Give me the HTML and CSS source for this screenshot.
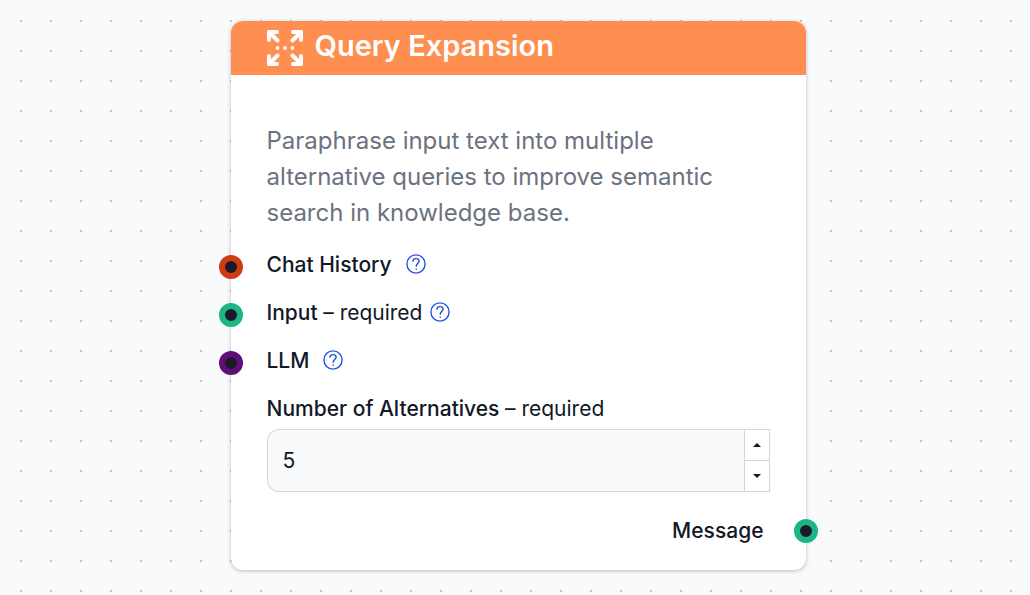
FILE: index.html
```
<!DOCTYPE html>
<html lang="en">
<head>
  <meta charset="UTF-8" />
  <meta name="viewport" content="width=device-width, initial-scale=1.0"/>
  <title>Query Expansion</title>
  <link rel="stylesheet" href="styles.css">
</head>
<body>

<svg class="sprite" aria-hidden="true">
  <symbol id="help" viewBox="0 0 20 20">
    <circle cx="10" cy="10" r="9.1" />
    <path d="M6.9 7.2C7.1 5.5 8.4 4.6 10.1 4.6C11.9 4.6 13.1 5.7 13.1 7.2C13.1 9.3 10.2 9.5 10.2 12.2" />
    <path d="M10.2 15V15.3" />
  </symbol>
</svg>

<main class="canvas">
  <section class="node">
    <header class="node-header">
      <svg class="node-icon" viewBox="0 0 36 36" aria-hidden="true">
        <g class="arrows">
          <path d="M2 10V2H10M2 2L10.5 10.5" />
          <path d="M26 2H34V10M34 2L25.5 10.5" />
          <path d="M2 26V34H10M2 34L10.5 25.5" />
          <path d="M26 34H34V26M34 34L25.5 25.5" />
        </g>
        <circle cx="10.5" cy="18" r="1.9" />
        <circle cx="18" cy="18" r="1.9" />
        <circle cx="25.5" cy="18" r="1.9" />
      </svg>
      <h1>Query Expansion</h1>
    </header>

    <div class="node-body">
      <p class="description">Paraphrase input text into multiple alternative queries to improve semantic search in knowledge base.</p>

      <div class="row">
        <span class="handle handle-in red"></span>
        <span class="label">Chat History</span>
        <button class="help spaced" type="button" aria-label="About Chat History"><svg><use href="#help" /></svg></button>
      </div>
      <div class="row">
        <span class="handle handle-in green"></span>
        <span class="label">Input <span class="required">– required</span></span>
        <button class="help" type="button" aria-label="About Input"><svg><use href="#help" /></svg></button>
      </div>
      <div class="row">
        <span class="handle handle-in purple"></span>
        <span class="label">LLM</span>
        <button class="help spaced" type="button" aria-label="About LLM"><svg><use href="#help" /></svg></button>
      </div>

      <div class="field">
        <label class="label" for="alternatives">Number of Alternatives <span class="required">– required</span></label>
        <div class="number">
          <input id="alternatives" type="text" inputmode="numeric" value="5">
          <div class="steps">
            <button type="button" onclick="step(1)" aria-label="Increase"><svg viewBox="0 0 8 4"><path d="M0 4L4 0L8 4Z" /></svg></button>
            <button type="button" onclick="step(-1)" aria-label="Decrease"><svg viewBox="0 0 8 4"><path d="M0 0L4 4L8 0Z" /></svg></button>
          </div>
        </div>
      </div>

      <div class="row output">
        <span class="label">Message</span>
        <span class="handle handle-out green"></span>
      </div>
    </div>
  </section>
</main>

<script>
  const input = document.getElementById('alternatives');

  function step(amount) {
    input.value = Math.max(1, (parseInt(input.value, 10) || 0) + amount);
  }
</script>

</body>
</html>
```
FILE: styles.css
```
* {
  box-sizing: border-box;
}
body {
  margin: 0;
  font-family: Inter, "Liberation Sans", sans-serif;
  color: #111827;
}
button {
  padding: 0;
  border: none;
  background: none;
  cursor: pointer;
}
.sprite {
  display: none;
}
.canvas {
  min-height: 100vh;
  padding: 21px 24px 24px 30px;
  background-color: #f9fafc;
  background-image: radial-gradient(circle at 1px 1px, #c2c2c4 1px, transparent 1px);
  background-size: 30px 30px;
  background-position: 20px 20px;
}
.node {
  max-width: 575px;
  margin: 0 auto;
  background: white;
  border-radius: 12px;
  box-shadow: 0 1px 4px rgba(0,0,0,0.25);
}
.node-header {
  display: flex;
  align-items: center;
  gap: 12px;
  min-height: 54px;
  padding: 0 36px;
  background: #ff8e51;
  border-radius: 12px 12px 0 0;
  color: white;
}
.node-header h1 {
  margin: 0;
  padding-bottom: 4px;
  font-size: 29px;
  line-height: 36px;
  font-weight: 600;
}
.node-icon {
  width: 36px;
  height: 36px;
  fill: white;
}
.arrows {
  fill: none;
  stroke: white;
  stroke-width: 4;
  stroke-linecap: round;
  stroke-linejoin: round;
}
.node-body {
  display: flex;
  flex-direction: column;
  gap: 16px;
  padding: 48px 36px 23px;
}
.description {
  margin: 0 0 2px;
  font-size: 24px;
  line-height: 36px;
  color: #6b7280;
}
.row {
  position: relative;
  display: flex;
  align-items: center;
  gap: 8px;
}
.label {
  font-size: 21px;
  line-height: 32px;
  font-weight: 500;
}
.required {
  font-weight: 400;
}
.help {
  width: 20px;
  height: 20px;
  margin-bottom: 2px;
}
.help.spaced {
  margin-left: 6px;
}
.help svg {
  display: block;
  width: 20px;
  height: 20px;
  fill: none;
  stroke: #2454dc;
  stroke-width: 1.4;
  stroke-linecap: round;
}
.handle {
  position: absolute;
  top: 6px;
  width: 24px;
  height: 24px;
  border: 6px solid;
  border-radius: 50%;
  background: #1b1a2b;
}
.handle-in {
  left: -48px;
}
.handle-out {
  top: 4px;
  right: -48px;
}
.red {
  border-color: #cf3c11;
}
.green {
  border-color: #1db583;
}
.purple {
  border-color: #5f0f78;
}
.field {
  display: flex;
  flex-direction: column;
  gap: 4px;
}
.number {
  display: flex;
  height: 63px;
}
.number input {
  flex: 1;
  min-width: 0;
  padding: 0 15px;
  border: 1px solid #d4d6dd;
  border-right: none;
  border-radius: 12px 0 0 12px;
  background: #f9fafc;
  font: inherit;
  font-size: 21px;
  color: inherit;
}
.steps {
  display: flex;
  flex-direction: column;
  width: 26px;
  border: 1px solid #d4d6dd;
}
.steps button {
  flex: 1;
  display: flex;
  align-items: center;
  justify-content: center;
}
.steps button + button {
  border-top: 1px solid #d4d6dd;
}
.steps svg {
  width: 8px;
  height: 4px;
  fill: #111827;
}
.output {
  justify-content: flex-end;
  margin-top: 7px;
  padding-right: 6px;
}
```
